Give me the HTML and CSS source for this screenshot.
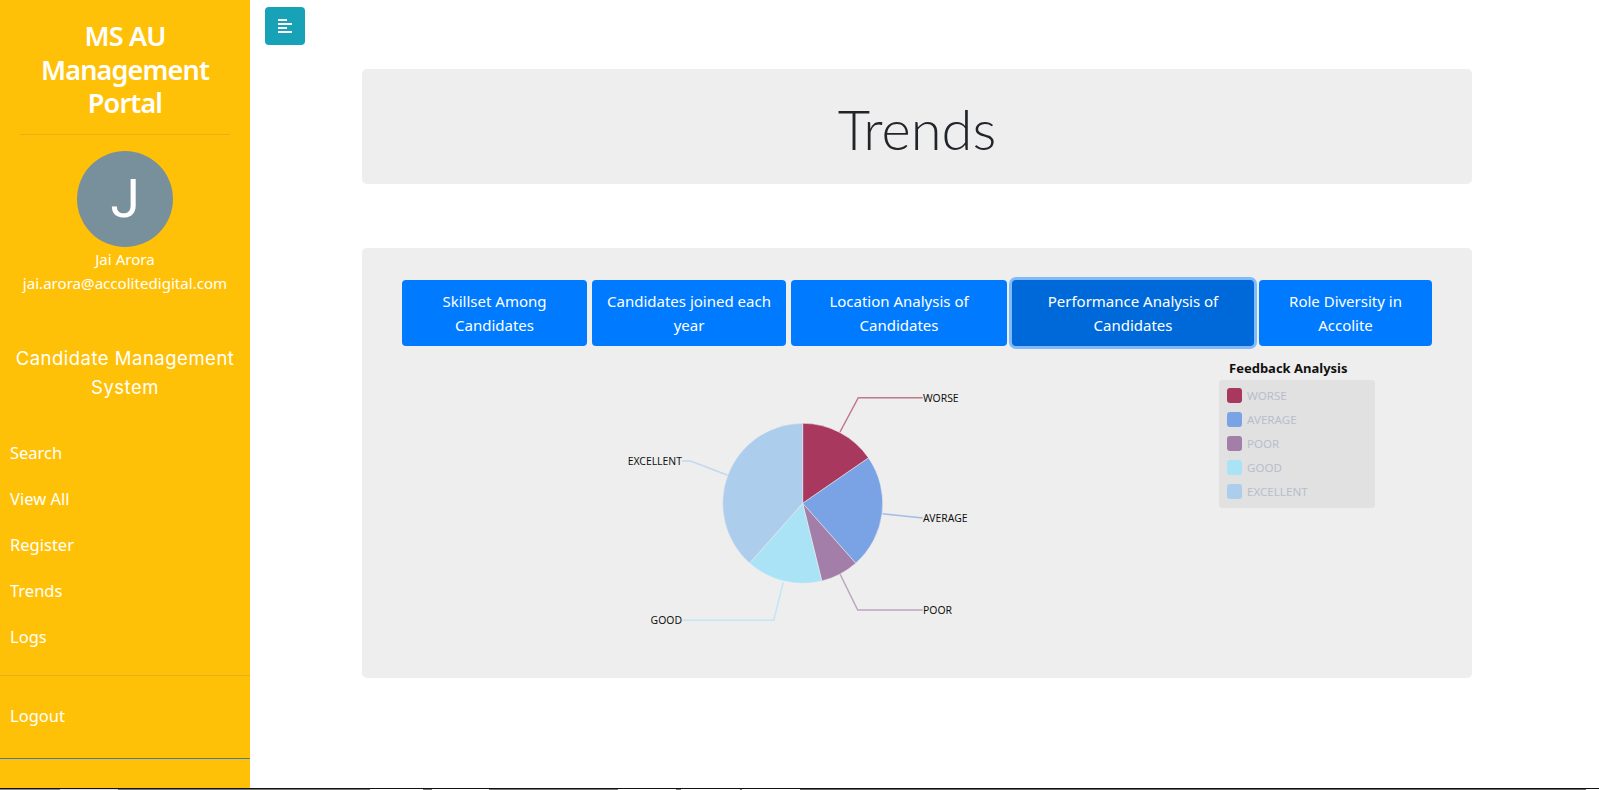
FILE: index.html
```html
<!DOCTYPE html>
<html lang="en">
<head>
<meta charset="utf-8">
<title>Trends</title>
<link rel="stylesheet" href="styles.css">
</head>
<body>
<div class="app">
  <aside class="sidebar">
    <div class="brand"><h3>MS AU Management Portal</h3></div>
    <div class="profile">
      <div class="avatar">J</div>
      <div class="profile-line">Jai Arora</div>
      <div class="profile-line">jai.arora@accolitedigital.com</div>
    </div>
    <p class="system">Candidate Management System</p>
    <nav class="nav">
      <a href="#">Search</a>
      <a href="#">View All</a>
      <a href="#">Register</a>
      <a href="#">Trends</a>
      <a href="#">Logs</a>
    </nav>
    <div class="logout"><a href="#">Logout</a></div>
  </aside>
  <main class="content">
    <button class="toggle" aria-label="Toggle sidebar">
      <svg width="14" height="14" viewBox="0 0 14 14"><path fill="#fff" d="M0 0h9v2H0zM0 4h14v2H0zM0 8h9v2H0zM0 12h14v2H0z"/></svg>
    </button>
    <section class="jumbo"><h1>Trends</h1></section>
    <section class="panel">
      <div class="tabs">
        <button class="tab">Skillset Among Candidates</button>
        <button class="tab">Candidates joined each year</button>
        <button class="tab">Location Analysis of Candidates</button>
        <button class="tab active">Performance Analysis of Candidates</button>
        <button class="tab">Role Diversity in Accolite</button>
      </div>
      <div class="chart">
        <svg class="pie" width="1110" height="330" viewBox="362 348 1110 330">
          <g class="leaders">
            <path stroke="#a8385d" d="M840 432L858.3 397.7H922.7"/>
            <path stroke="#7aa3e5" d="M882.3 513.7L922.7 518"/>
            <path stroke="#a27ea8" d="M840 574L857.7 610H922.7"/>
            <path stroke="#aae3f5" d="M783.3 582.3L773.7 620.3H682.3"/>
            <path stroke="#adcded" d="M727.7 475.3L690.7 461H682.3"/>
          </g>
          <g class="slices">
            <path fill="#a8385d" d="M802.67 503.33V423.33A80 80 0 0 1 868.51 457.88Z"/>
            <path fill="#7aa3e5" d="M802.67 503.33L868.51 457.88A80 80 0 0 1 855.72 563.21Z"/>
            <path fill="#a27ea8" d="M802.67 503.33L855.72 563.21A80 80 0 0 1 821.81 581Z"/>
            <path fill="#aae3f5" d="M802.67 503.33L821.81 581A80 80 0 0 1 749.62 563.21Z"/>
            <path fill="#adcded" d="M802.67 503.33L749.62 563.21A80 80 0 0 1 802.67 423.33Z"/>
          </g>
          <g class="labels">
            <text x="923" y="402">WORSE</text>
            <text x="923" y="522">AVERAGE</text>
            <text x="923" y="614">POOR</text>
            <text x="682" y="624" text-anchor="end">GOOD</text>
            <text x="682" y="465" text-anchor="end">EXCELLENT</text>
          </g>
        </svg>
        <div class="legend">
          <div class="legend-title">Feedback Analysis</div>
          <ul class="legend-box">
            <li><i class="sw sw1"></i>WORSE</li>
            <li><i class="sw sw2"></i>AVERAGE</li>
            <li><i class="sw sw3"></i>POOR</li>
            <li><i class="sw sw4"></i>GOOD</li>
            <li><i class="sw sw5"></i>EXCELLENT</li>
          </ul>
        </div>
      </div>
    </section>
  </main>
</div>
<div class="strip"></div>
</body>
</html>
```
FILE: styles.css
```css
* { box-sizing: border-box; }
html, body { margin: 0; height: 100%; overflow: hidden; }
body {
  font-family: "Noto Sans", "Open Sans", sans-serif;
  background: #fff;
  display: flex;
  flex-direction: column;
  height: 790px;
}
.app { display: flex; height: 788px; }
.sidebar {
  width: 250px;
  flex: none;
  background: #ffc107;
  color: #fff;
  display: flex;
  flex-direction: column;
}
.brand { margin: 0 20px; padding: 19px 0 14px; border-bottom: 1px solid #e7b01a; text-align: center; }
.brand h3 { margin: 0; font-size: 27px; line-height: 33.6px; font-weight: 600; letter-spacing: -0.85px; }
.profile { text-align: center; padding-top: 16px; }
.avatar {
  width: 96px; height: 96px; margin: 0 auto;
  border-radius: 50%;
  background: #78909c;
  color: #fff;
  font-family: Roboto, sans-serif;
  font-weight: 400;
  font-size: 53px;
  line-height: 96px;
}
.profile-line { font-size: 15.1px; line-height: 24px; }
.system {
  margin: 0;
  padding: 49px 5px 0;
  text-align: center;
  font-family: Inter, Lato, sans-serif;
  font-weight: 400;
  font-size: 18.5px;
  letter-spacing: .5px;
  line-height: 29px;
}
.nav { display: flex; flex-direction: column; padding-top: 29px; padding-bottom: 14px; border-bottom: 1px solid #e7b01a; }
.nav a, .logout a {
  display: block;
  color: #fff;
  text-decoration: none;
  font-size: 16.5px;
  line-height: 24px;
  padding: 10px 10px 12px;
  height: 46px;
}
.logout { padding: 18px 0 18px; border-bottom: 1px solid #3f7db5; }
.content { flex: 1; min-width: 0; padding: 7px 127px 0 15px; position: relative; }
.toggle {
  display: flex; align-items: center; justify-content: center;
  width: 40px; height: 38px;
  padding: 0;
  border: 0;
  border-radius: 4px;
  background: #17a2b8;
}
.jumbo {
  margin: 24px 0 0 97px;
  height: 115px;
  padding-top: 3px;
  background: #eee;
  border-radius: 4.8px;
  display: flex; align-items: center; justify-content: center;
}
.jumbo h1 { margin: 0; font-size: 56px; font-weight: 300; color: #212529; font-family: Lato, "Open Sans", sans-serif; line-height: 67px; }
.panel {
  margin: 64px 0 0 97px;
  height: 430px;
  background: #eee;
  border-radius: 4.8px;
  padding: 32px 40px 0;
  position: relative;
}
.tabs { display: grid; grid-template-columns: 185px 194px 216px 242px 173px; gap: 5px; }
.tab {
  height: 66px;
  padding: 6px 12px;
  border: 0;
  border-radius: 4px;
  background: #007bff;
  color: #fff;
  font-family: inherit;
  font-size: 15px;
  line-height: 24px;
}
.tab.active { background: #0069d9; box-shadow: 0 0 0 3px #7fbbfb; }
.chart { position: absolute; left: 0; top: 100px; width: 1110px; height: 330px; }
.pie { display: block; }
.leaders path { fill: none; stroke-width: 1.5; opacity: .65; }
.slices path { stroke: #eee; stroke-width: .5; }
.labels text { font-family: "Noto Sans", sans-serif; font-size: 10.4px; fill: #111; }
.legend { position: absolute; left: 857px; top: 11px; width: 156px; }
.legend-title { padding-left: 10px; font-size: 13px; font-weight: 700; color: #111; line-height: 18px; }
.legend-box {
  list-style: none;
  margin: 3px 0 0;
  padding: 8px 8px 4px;
  height: 128px;
  background: #e1e1e1;
  border-radius: 3px;
}
.legend-box li { display: flex; align-items: center; height: 24px; padding-bottom: 9px; font-size: 11.6px; color: #b9bdcb; }
.sw { width: 15px; height: 15px; border-radius: 3px; margin-right: 5px; flex: none; }
.sw1 { background: #a8385d; }
.sw2 { background: #7aa3e5; }
.sw3 { background: #a27ea8; }
.sw4 { background: #aae3f5; }
.sw5 { background: #adcded; }
.strip {
  height: 2px;
  flex: none;
  border-top: 1px solid #111;
  background: linear-gradient(to right,
    #888 0 60px, #ddd 60px 118px, #777 118px 370px, #fff 370px 423px, #777 423px 432px, #fff 432px 489px,
    #777 489px 618px, #fff 618px 676px, #777 676px 681px, #fff 681px 740px, #777 740px 742px, #fff 742px 800px,
    #666 800px 1586px, #fff 1586px);
}
```
